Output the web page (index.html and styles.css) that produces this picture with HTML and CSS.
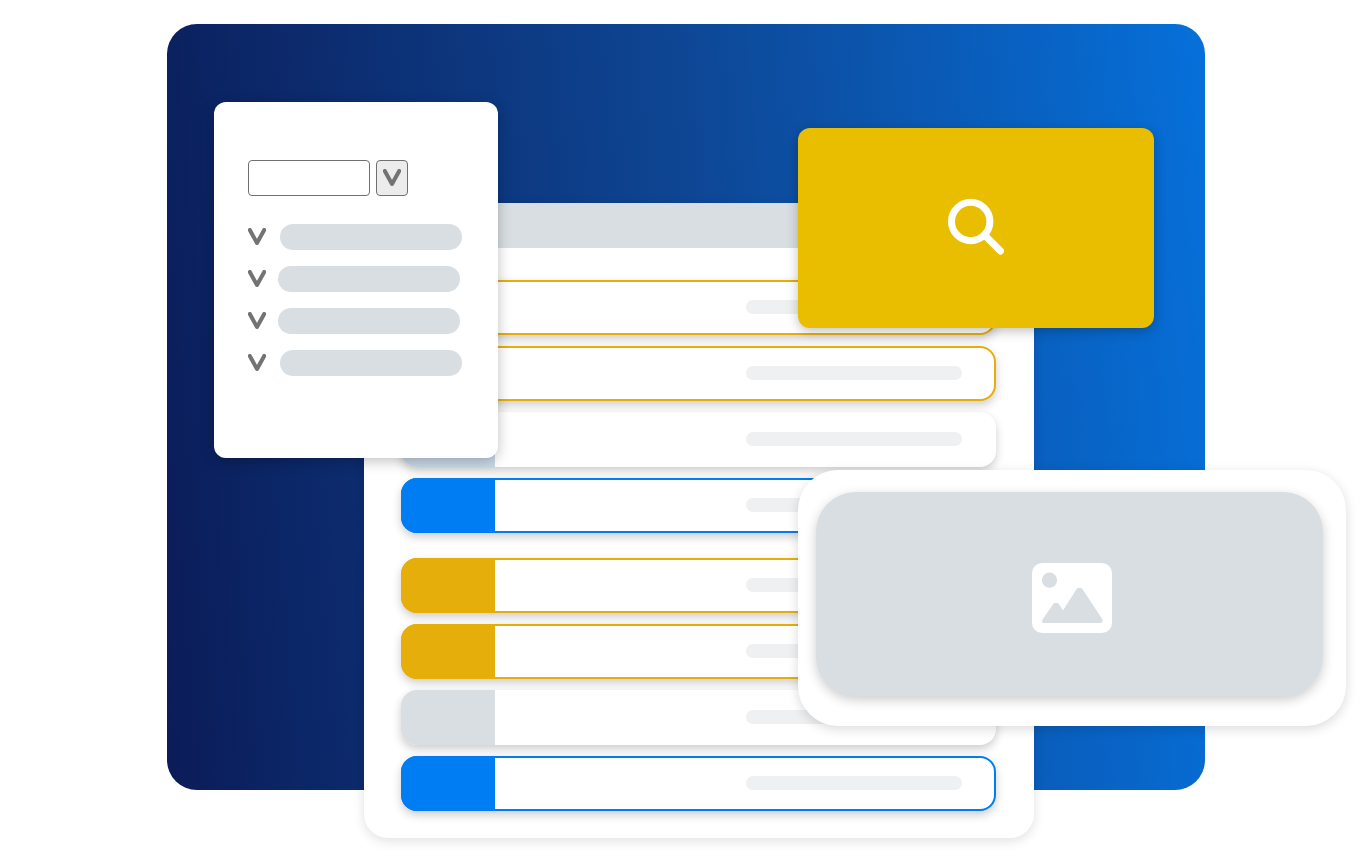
FILE: index.html
```html
<!DOCTYPE html>
<html lang="en">
<head>
  <meta charset="UTF-8">
  <meta name="viewport" content="width=device-width, initial-scale=1.0">
  <title>Dashboard</title>
  <link rel="stylesheet" href="styles.css">
</head>
<body>

  <svg width="0" height="0" class="symbols" aria-hidden="true">
    <symbol id="check" viewBox="0 0 18 18">
      <path d="M1.8 2 L9 15 L16.2 2" fill="none" stroke="#737373" stroke-width="4" stroke-linecap="round" stroke-linejoin="round"/>
    </symbol>
  </svg>

  <main class="stage">
    <!-- Main list panel -->
    <section class="panel">
      <div class="panel-header"></div>
      <div class="panel-body">
        <div class="group">
          <div class="row gold"><div class="tag"></div><div class="line"></div></div>
          <div class="row gold"><div class="tag"></div><div class="line"></div></div>
          <div class="row pale"><div class="tag"></div><div class="line"></div></div>
          <div class="row blue"><div class="tag"></div><div class="line"></div></div>
        </div>
        <div class="group">
          <div class="row gold"><div class="tag"></div><div class="line"></div></div>
          <div class="row gold"><div class="tag"></div><div class="line"></div></div>
          <div class="row grey"><div class="tag"></div><div class="line"></div></div>
          <div class="row blue"><div class="tag"></div><div class="line"></div></div>
        </div>
      </div>
    </section>

    <!-- Filter card -->
    <aside class="filter-card">
      <div class="filter-field">
        <input type="text" class="filter-input" aria-label="Filter">
        <button type="button" class="filter-button" aria-label="Open">
          <svg class="check"><use href="#check"/></svg>
        </button>
      </div>
      <ul class="filter-list">
        <li><svg class="check"><use href="#check"/></svg><span class="pill"></span></li>
        <li class="tight"><svg class="check"><use href="#check"/></svg><span class="pill"></span></li>
        <li class="tight"><svg class="check"><use href="#check"/></svg><span class="pill"></span></li>
        <li><svg class="check"><use href="#check"/></svg><span class="pill"></span></li>
      </ul>
    </aside>

    <!-- Search card -->
    <button type="button" class="search-card" aria-label="Search">
      <svg width="56" height="60" viewBox="0 0 56 60" fill="none" stroke="#fff" stroke-width="7" stroke-linecap="round">
        <circle cx="22.7" cy="23.5" r="19.2"/>
        <path d="M37.5 38 L52.5 53"/>
      </svg>
    </button>

    <!-- Picture card -->
    <section class="picture-card">
      <div class="picture">
        <svg width="80" height="70" viewBox="0 0 80 70">
          <rect width="80" height="70" rx="10" fill="#fff"/>
          <circle cx="17.5" cy="17.2" r="7.6" fill="#d9dee2"/>
          <path d="M12 58 L22.5 42.5 Q24 41 25.5 42.5 L31 51 L46 27.5 Q47.5 26 49 27.5 L68.5 57 V58 Z" fill="#d9dee2" stroke="#d9dee2" stroke-width="4" stroke-linejoin="round"/>
        </svg>
      </div>
    </section>
  </main>

</body>
</html>
```
FILE: styles.css
```css
* {
  margin: 0;
  padding: 0;
  box-sizing: border-box;
}

body {
  background-color: #fff;
  font-family: "Open Sans", Arial, sans-serif;
  overflow-x: hidden;
}

.symbols {
  position: absolute;
}

.stage {
  position: relative;
  display: flow-root;
  max-width: 1038px;
  margin: 24px auto 70px;
  padding: 179px 171px 0 197px;
  border-radius: 30px;
  background: linear-gradient(85deg, #0b1c58 0%, #0e4694 52%, #0670da 100%);
}

/* Main list panel, hangs below the blue backdrop */
.panel {
  margin-bottom: -48px;
  background-color: #fff;
  border-radius: 0 0 24px 24px;
  box-shadow: 0 3px 12px rgba(0, 0, 0, 0.12);
}

.panel-header {
  height: 45px;
  background-color: #d9dee2;
}

.panel-body {
  display: flex;
  flex-direction: column;
  gap: 25px;
  padding: 32px 38px 27px 37px;
}

.group {
  display: flex;
  flex-direction: column;
  gap: 11px;
}

.row {
  display: flex;
  align-items: center;
  justify-content: space-between;
  height: 55px;
  padding: 0 32px 2px 0;
  border: 2px solid transparent;
  border-radius: 16px;
  background-color: #fff;
  box-shadow: 0 4px 10px rgba(0, 0, 0, 0.2);
}

.tag {
  align-self: flex-start;
  width: 94px;
  height: 55px;
  margin: -2px 0 0 -2px;
  border-radius: 16px 0 0 16px;
}

.line {
  width: 216px;
  height: 14px;
  border-radius: 7px;
  background-color: #eef0f1;
}

.gold {
  border-color: #e6ae0b;
}

.gold .tag {
  background-color: #e6ae0b;
}

.blue {
  border-color: #007df2;
}

.blue .tag {
  background-color: #007df2;
}

.grey .tag {
  background-color: #d9dee2;
}

.pale .tag {
  background-color: #c8d8e6;
}

/* Filter card */
.filter-card {
  position: absolute;
  top: 78px;
  left: 47px;
  width: 284px;
  padding: 58px 34px 82px;
  border-radius: 12px;
  background-color: #fff;
  box-shadow: 0 3px 14px rgba(0, 0, 0, 0.25);
}

.filter-field {
  display: flex;
  gap: 6px;
  margin-bottom: 28px;
}

.filter-input {
  width: 122px;
  height: 36px;
  padding: 0 8px;
  border: 1px solid #707070;
  border-radius: 4px;
}

.filter-button {
  display: flex;
  align-items: center;
  justify-content: center;
  width: 32px;
  height: 36px;
  border: 1px solid #707070;
  border-radius: 4px;
  background-color: #ececec;
  cursor: pointer;
}

.check {
  flex: none;
  width: 18px;
  height: 18px;
}

.filter-list {
  display: flex;
  flex-direction: column;
  gap: 16px;
  list-style: none;
}

.filter-list li {
  display: flex;
  align-items: center;
  gap: 14px;
}

.filter-list .tight {
  gap: 12px;
}

.pill {
  width: 182px;
  height: 26px;
  border-radius: 13px;
  background-color: #d9dee2;
}

/* Search card */
.search-card {
  position: absolute;
  top: 104px;
  left: 631px;
  display: flex;
  align-items: center;
  justify-content: center;
  width: 356px;
  height: 200px;
  border: none;
  border-radius: 12px;
  background-color: #e9be00;
  box-shadow: 0 3px 12px rgba(0, 0, 0, 0.25);
  cursor: pointer;
}

/* Picture card */
.picture-card {
  position: absolute;
  top: 446px;
  left: 631px;
  width: 548px;
  padding: 22px 23px 30px 18px;
  border-radius: 40px;
  background-color: #fff;
  box-shadow: 0 3px 12px rgba(0, 0, 0, 0.15);
}

.picture {
  display: flex;
  align-items: center;
  justify-content: center;
  height: 204px;
  padding: 8px 0 0 4px;
  border-radius: 40px;
  background-color: #d9dee2;
  box-shadow: 0 4px 12px rgba(0, 0, 0, 0.2);
}
```
